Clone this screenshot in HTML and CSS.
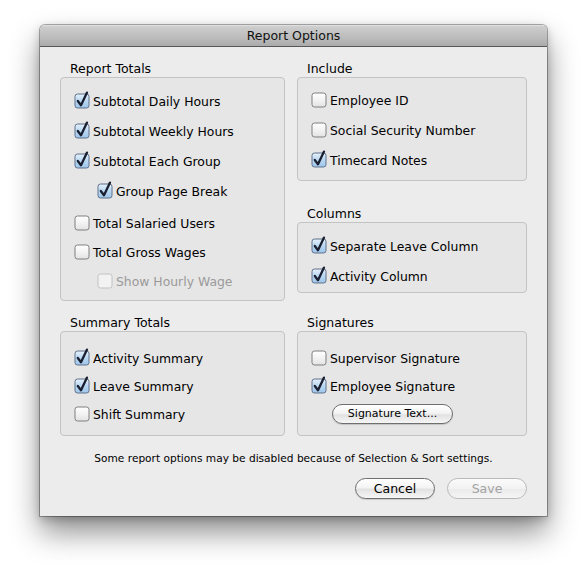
FILE: index.html
```html
<!DOCTYPE html>
<html>
<head>
<meta charset="utf-8">
<link rel="stylesheet" href="styles.css">
</head>
<body>
<svg class="defs" width="0" height="0">
  <defs>
    <linearGradient id="gOff" x1="0" y1="0" x2="0" y2="1">
      <stop offset="0" stop-color="#ffffff"/>
      <stop offset="0.5" stop-color="#f3f3f3"/>
      <stop offset="1" stop-color="#e2e2e2"/>
    </linearGradient>
    <linearGradient id="gOn" x1="0" y1="0" x2="0" y2="1">
      <stop offset="0" stop-color="#e6f1fb"/>
      <stop offset="0.5" stop-color="#b9d7f2"/>
      <stop offset="1" stop-color="#9ec5ea"/>
    </linearGradient>
    <symbol id="boxOff" viewBox="0 0 16 16">
      <rect x="1" y="1" width="14" height="14" rx="2.5" fill="url(#gOff)" stroke="#7f7f7f"/>
    </symbol>
    <symbol id="boxOn" viewBox="0 0 16 16" overflow="visible">
      <rect x="1" y="1" width="14" height="14" rx="2.5" fill="url(#gOn)" stroke="#5f7089"/>
      <path d="M3.8 8 L7 12.2 L13 -0.4" fill="none" stroke="#1a2030" stroke-width="2.3" stroke-linecap="round" stroke-linejoin="round"/>
    </symbol>
    <symbol id="boxDis" viewBox="0 0 16 16">
      <rect x="1" y="1" width="14" height="14" rx="2.5" fill="#f2f2f2" stroke="#c2c2c2"/>
    </symbol>
  </defs>
</svg>

<div class="window">
  <div class="titlebar">Report Options</div>
  <div class="content">
    <div class="groups">
      <section class="group">
        <div class="glabel">Report Totals</div>
        <div class="gbox box-totals">
          <div class="row"><svg class="cb"><use href="#boxOn"/></svg><span>Subtotal Daily Hours</span></div>
          <div class="row"><svg class="cb"><use href="#boxOn"/></svg><span>Subtotal Weekly Hours</span></div>
          <div class="row"><svg class="cb"><use href="#boxOn"/></svg><span>Subtotal Each Group</span></div>
          <div class="row indent"><svg class="cb"><use href="#boxOn"/></svg><span>Group Page Break</span></div>
          <div class="row lower"><svg class="cb"><use href="#boxOff"/></svg><span>Total Salaried Users</span></div>
          <div class="row short"><svg class="cb"><use href="#boxOff"/></svg><span>Total Gross Wages</span></div>
          <div class="row indent disabled"><svg class="cb"><use href="#boxDis"/></svg><span>Show Hourly Wage</span></div>
        </div>
      </section>

      <div class="stack">
        <section class="group">
          <div class="glabel">Include</div>
          <div class="gbox box-include">
            <div class="row"><svg class="cb"><use href="#boxOff"/></svg><span>Employee ID</span></div>
            <div class="row"><svg class="cb"><use href="#boxOff"/></svg><span>Social Security Number</span></div>
            <div class="row"><svg class="cb"><use href="#boxOn"/></svg><span>Timecard Notes</span></div>
          </div>
        </section>
        <section class="group columns">
          <div class="glabel">Columns</div>
          <div class="gbox box-columns">
            <div class="row"><svg class="cb"><use href="#boxOn"/></svg><span>Separate Leave Column</span></div>
            <div class="row"><svg class="cb"><use href="#boxOn"/></svg><span>Activity Column</span></div>
          </div>
        </section>
      </div>

      <section class="group">
        <div class="glabel">Summary Totals</div>
        <div class="gbox box-bottom">
          <div class="row tight"><svg class="cb"><use href="#boxOn"/></svg><span>Activity Summary</span></div>
          <div class="row tight"><svg class="cb"><use href="#boxOn"/></svg><span>Leave Summary</span></div>
          <div class="row tight"><svg class="cb"><use href="#boxOff"/></svg><span>Shift Summary</span></div>
        </div>
      </section>

      <section class="group">
        <div class="glabel">Signatures</div>
        <div class="gbox box-bottom">
          <div class="row tight"><svg class="cb"><use href="#boxOff"/></svg><span>Supervisor Signature</span></div>
          <div class="row tight"><svg class="cb"><use href="#boxOn"/></svg><span>Employee Signature</span></div>
          <div class="row tight btnrow"><button class="btn small">Signature Text...</button></div>
        </div>
      </section>
    </div>

    <p class="note">Some report options may be disabled because of Selection &amp; Sort settings.</p>

    <div class="actions">
      <button class="btn">Cancel</button>
      <button class="btn off">Save</button>
    </div>
  </div>
</div>
</body>
</html>
```

FILE: styles.css
```css
html, body {
  margin: 0;
  padding: 0;
  background: #ffffff;
}

body {
  font-family: "DejaVu Sans", "Liberation Sans", sans-serif;
  font-size: 12.4px;
  color: #000;
  min-height: 571px;
  padding-top: 25px;
  box-sizing: border-box;
}

.defs {
  position: absolute;
  width: 0;
  height: 0;
}

.window {
  margin: 0 0 0 40px;
  width: 507px;
  height: 491px;
  box-sizing: border-box;
  background: #ececec;
  border-radius: 5px 5px 0 0;
  box-shadow: 0 0 0 1px rgba(0, 0, 0, 0.3), 0 16px 30px rgba(0, 0, 0, 0.45), 0 3px 10px rgba(0, 0, 0, 0.22);
  display: flex;
  flex-direction: column;
}

.titlebar {
  height: 21px;
  line-height: 22px;
  border-bottom: 1px solid #575757;
  border-radius: 5px 5px 0 0;
  background: linear-gradient(#e6e6e6, #cdcdcd 8%, #bcbcbc 60%, #ababab);
  text-align: center;
  font-size: 12.5px;
  color: #111;
}

.content {
  padding: 14px 20px 17px 20px;
  display: flex;
  flex-direction: column;
}

.groups {
  display: grid;
  grid-template-columns: 225px 230px;
  column-gap: 12px;
  row-gap: 14px;
  align-items: start;
}

.stack {
  display: flex;
  flex-direction: column;
}

.glabel {
  height: 16px;
  line-height: 16px;
  padding-left: 10px;
  font-size: 12.5px;
}

.gbox {
  box-sizing: border-box;
  border: 1px solid #c3c3c3;
  border-radius: 4px;
  background: #e6e6e6;
  display: flex;
  flex-direction: column;
}

.box-totals {
  height: 224px;
  padding-top: 8px;
}

.box-include {
  height: 104px;
  padding-top: 7px;
}

.columns {
  margin-top: 25px;
}

.box-columns {
  height: 71px;
  padding-top: 8px;
}

.box-bottom {
  height: 105px;
  padding-top: 12px;
}

.row {
  height: 30px;
  display: flex;
  align-items: center;
  padding-left: 13px;
  gap: 3px;
  white-space: nowrap;
}

.row.tight {
  height: 28px;
}

.row.lower {
  height: 32px;
  padding-top: 2px;
  box-sizing: border-box;
}

.row.short {
  height: 28px;
}

.row.indent {
  padding-left: 36px;
}

.row.disabled {
  color: #9a9a9a;
}

.cb {
  width: 16px;
  height: 16px;
  flex: none;
  overflow: visible;
}

.btnrow {
  padding-left: 34px;
}

.btn {
  font-family: inherit;
  font-size: 12.5px;
  width: 80px;
  height: 21px;
  padding: 0;
  border: 1px solid #6f6f6f;
  border-radius: 11px;
  background: linear-gradient(#ffffff, #f4f4f4 45%, #e2e2e2 55%, #f6f6f6);
  box-shadow: 0 1px 1px rgba(0, 0, 0, 0.15);
  color: #000;
  line-height: 19px;
}

.btn.small {
  width: 121px;
  height: 20px;
  font-size: 11px;
  line-height: 18px;
}

.btn.off {
  border-color: #b9b9b9;
  color: #a3a3a3;
  box-shadow: none;
  background: linear-gradient(#fbfbfb, #f2f2f2 50%, #ebebeb 55%, #f5f5f5);
}

.note {
  margin: 14px 0 0 0;
  height: 16px;
  line-height: 16px;
  text-align: center;
  font-size: 10.6px;
}

.actions {
  margin-top: 12px;
  display: flex;
  justify-content: flex-end;
  gap: 12px;
}
```
